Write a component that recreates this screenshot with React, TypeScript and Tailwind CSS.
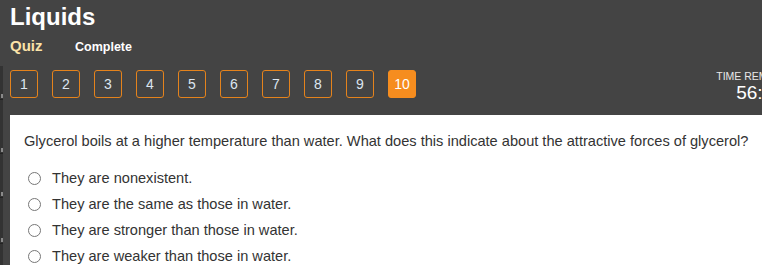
import React from "react";

const nums = [1, 2, 3, 4, 5, 6, 7, 8, 9, 10];
const options = [
  "They are nonexistent.",
  "They are the same as those in water.",
  "They are stronger than those in water.",
  "They are weaker than those in water.",
];

function Segment({ h }: { h: string }) {
  return (
    <div className={`relative w-[3px] ${h} bg-[#333333] border-b border-[#222222]`}>
      <div className="absolute bottom-[1px] right-0 w-[2px] h-[4px] bg-[#8a8a8a]" />
    </div>
  );
}

export default function App() {
  return (
    <div
      className="w-[762px] h-[265px] overflow-hidden bg-[#444444] relative"
      style={{ fontFamily: '"Liberation Sans", Arial, sans-serif' }}
    >
      <div className="absolute left-0 top-[66px] flex flex-col">
        <Segment h="h-[34px]" />
        <Segment h="h-[54px]" />
        <Segment h="h-[44px]" />
        <Segment h="h-[46px]" />
        <div className="w-[3px] h-[30px] bg-[#333333]" />
      </div>
      <div className="pl-[10px] pt-[3px]">
        <div className="text-[24px] leading-[28px] font-bold text-white">Liquids</div>
        <div className="flex items-baseline mt-[7px] h-[16px]">
          <span className="text-[15px] leading-[16px] font-bold text-[#fbe3a8] w-[65px]">Quiz</span>
          <span className="text-[12.5px] leading-[16px] font-bold text-white">Complete</span>
        </div>
        <div className="flex items-start mt-[16px]">
          <div className="flex gap-[14px]">
            {nums.map((n) => (
              <div
                key={n}
                className={
                  n === 10
                    ? "w-[28px] h-[28px] rounded-[3px] bg-[#f68d1f] border border-[#f68d1f] text-white flex items-center justify-center text-[14px]"
                    : "w-[28px] h-[28px] rounded-[3px] border border-[#e5831c] text-[#dde6f0] flex items-center justify-center text-[14px]"
                }
              >
                {n}
              </div>
            ))}
          </div>
          <div className="shrink-0 w-[104px] ml-[292px] text-center text-[#e8e8e8]">
            <div className="text-[10.5px] leading-[12px] whitespace-nowrap">TIME REMAINING</div>
            <div className="text-[19px] leading-[22px] text-white whitespace-nowrap">56:00</div>
          </div>
        </div>
      </div>
      <div className="absolute left-[10px] top-[115px] w-[760px] h-[160px] bg-white pl-[14px] pt-[17px]">
        <div className="text-[14.6px] leading-[18px] text-[#333333] whitespace-nowrap">
          Glycerol boils at a higher temperature than water. What does this indicate about the attractive forces of glycerol?
        </div>
        <div className="flex flex-col mt-[15px]">
          {options.map((o) => (
            <div key={o} className="flex items-center h-[26px]">
              <span className="ml-[4px] w-[13px] h-[13px] rounded-full border border-[#777777] bg-white shrink-0" />
              <span className="ml-[11px] text-[14.6px] leading-[18px] text-[#333333]">{o}</span>
            </div>
          ))}
        </div>
      </div>
    </div>
  );
}
